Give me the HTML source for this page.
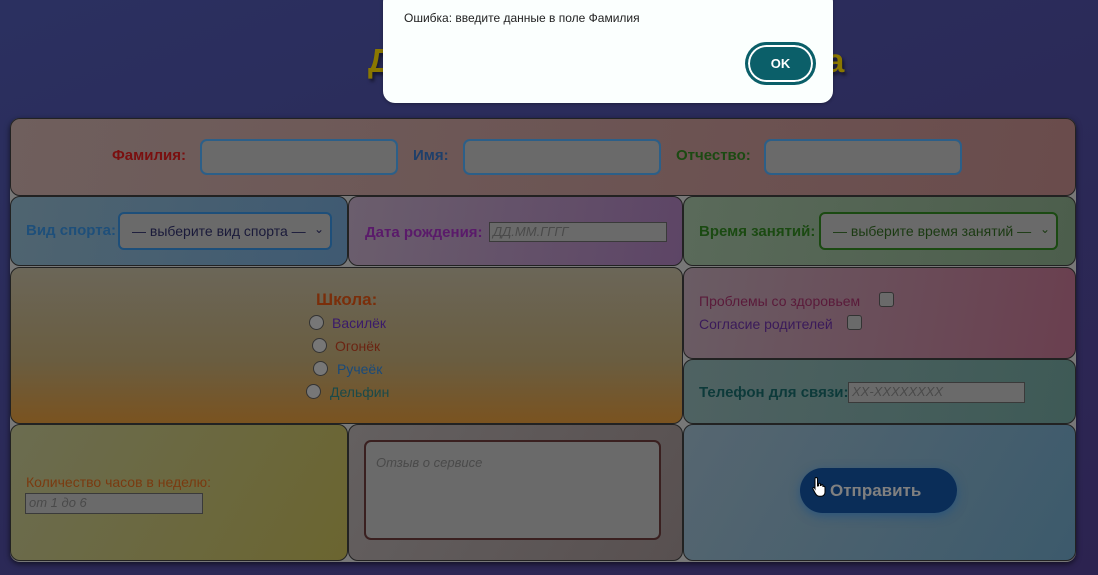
<!DOCTYPE html>
<html><head><meta charset="utf-8"><style>
*{box-sizing:border-box;margin:0;padding:0}
body{width:1098px;height:575px;overflow:hidden;position:relative;font-family:"Liberation Sans","DejaVu Sans",sans-serif;background:linear-gradient(160deg,#2b3060 0%,#2b2a58 50%,#2c2350 100%)}
.a{position:absolute}
.c{position:absolute;border:1.5px solid #222;border-radius:10px}
.lbl{position:absolute;font-weight:bold;font-size:15px}
.inp{position:absolute;background:#6a6a6a;border:1.5px solid #3a3a3a}
.ph{font-style:italic;color:#4a4a4a;font-size:13px;padding-left:3px;line-height:18px}
.rad{position:absolute;width:15px;height:15px;border-radius:50%;background:#777;border:1.5px solid #333}
.chk{position:absolute;width:15px;height:15px;border-radius:3px;background:#6a6a6a;border:1.5px solid #333}
</style></head><body>
<div class="a" style="left:368px;top:42px;font-size:33px;font-weight:bold;color:#8a7700;text-shadow:2px 3px 3px rgba(0,0,0,.5)">Д</div>
<div class="a" style="left:826px;top:42px;font-size:33px;font-weight:bold;color:#8a7700;text-shadow:2px 3px 3px rgba(0,0,0,.5)">а</div>

<div class="a" style="left:10px;top:118px;width:1066px;height:444px;background:#777;border-radius:10px;box-shadow:0 2px 6px rgba(0,0,0,.6)"></div>

<div class="c" style="left:10px;top:118px;width:1066px;height:78px;background:linear-gradient(100deg,#6f5f5d,#6a4c4c)"></div>
<div class="lbl" style="left:112px;top:147px;color:#7a0f0f">Фамилия:</div>
<div class="inp" style="left:200px;top:139px;width:198px;height:36px;border:2px solid #2c5f88;border-radius:7px"></div>
<div class="lbl" style="left:413px;top:147px;color:#1e3f6a">Имя:</div>
<div class="inp" style="left:463px;top:139px;width:198px;height:36px;border:2px solid #2c5f88;border-radius:7px"></div>
<div class="lbl" style="left:676px;top:147px;color:#1b4a12">Отчество:</div>
<div class="inp" style="left:764px;top:139px;width:198px;height:36px;border:2px solid #2c5f88;border-radius:7px"></div>

<div class="c" style="left:10px;top:196px;width:338px;height:70px;background:linear-gradient(100deg,#4f6470,#3f5a72)"></div>
<div class="lbl" style="left:26px;top:222px;color:#1e4f7a">Вид спорта:</div>
<div class="inp" style="left:118px;top:212px;width:214px;height:38px;border:2px solid #1e4f7a;border-radius:6px;font-size:14px;color:#1a1a3a;padding:9px 0 0 12px">— выберите вид спорта —<span style="position:absolute;right:6px;top:8px;font-size:12px">&#8964;</span></div>

<div class="c" style="left:348px;top:196px;width:335px;height:70px;background:linear-gradient(100deg,#6b5e6d,#5d4566)"></div>
<div class="lbl" style="left:365px;top:224px;color:#5a1a6a">Дата рождения:</div>
<div class="inp ph" style="left:489px;top:222px;width:178px;height:20px">ДД.ММ.ГГГГ</div>

<div class="c" style="left:683px;top:196px;width:393px;height:70px;background:linear-gradient(100deg,#5a6a5a,#4c5e4c)"></div>
<div class="lbl" style="left:699px;top:223px;color:#1b4a12">Время занятий:</div>
<div class="inp" style="left:819px;top:212px;width:239px;height:38px;border:2px solid #1b4a12;border-radius:6px;font-size:14px;color:#1b3a12;padding:9px 0 0 12px">— выберите время занятий —<span style="position:absolute;right:6px;top:8px;font-size:12px">&#8964;</span></div>

<div class="c" style="left:10px;top:267px;width:673px;height:157px;background:linear-gradient(180deg,#6b6658,#6a5d40 60%,#7a5320)"></div>
<div class="lbl" style="left:316px;top:290px;font-size:17px;color:#7a2e0a">Школа:</div>
<div class="rad" style="left:309px;top:315px"></div><div class="a" style="left:332px;top:315px;font-size:14px;color:#3a1a6a">Василёк</div>
<div class="rad" style="left:312px;top:338px"></div><div class="a" style="left:335px;top:338px;font-size:14px;color:#6a2412">Огонёк</div>
<div class="rad" style="left:313px;top:361px"></div><div class="a" style="left:337px;top:361px;font-size:14px;color:#1a4a7a">Ручеёк</div>
<div class="rad" style="left:306px;top:384px"></div><div class="a" style="left:330px;top:384px;font-size:14px;color:#1a4a4a">Дельфин</div>

<div class="c" style="left:683px;top:267px;width:393px;height:92px;background:linear-gradient(100deg,#6a5c64,#6a3f4f)"></div>
<div class="a" style="left:699px;top:293px;font-size:14px;color:#5a1a3a">Проблемы со здоровьем</div>
<div class="chk" style="left:879px;top:292px"></div>
<div class="a" style="left:699px;top:316px;font-size:14px;color:#3a1a5a">Согласие родителей</div>
<div class="chk" style="left:847px;top:315px"></div>

<div class="c" style="left:683px;top:359px;width:393px;height:65px;background:linear-gradient(100deg,#4f6262,#3e5a56)"></div>
<div class="lbl" style="left:699px;top:384px;color:#0d3a3a">Телефон для связи:</div>
<div class="inp ph" style="left:848px;top:382px;width:177px;height:21px">XX-XXXXXXXX</div>

<div class="c" style="left:10px;top:424px;width:338px;height:137px;background:linear-gradient(120deg,#6b6c50,#6b6530)"></div>
<div class="a" style="left:26px;top:474px;font-size:14px;color:#7a3a10">Количество часов в неделю:</div>
<div class="inp ph" style="left:25px;top:493px;width:178px;height:21px">от 1 до 6</div>

<div class="c" style="left:348px;top:424px;width:335px;height:137px;background:linear-gradient(120deg,#646060,#585050)"></div>
<div class="inp" style="left:364px;top:440px;width:297px;height:100px;border:2px solid #3a2020;border-radius:7px"><div class="ph" style="padding:12px 0 0 10px">Отзыв о сервисе</div></div>

<div class="c" style="left:683px;top:424px;width:393px;height:137px;background:linear-gradient(120deg,#566670,#3c5a6c)"></div>
<div class="a" style="left:800px;top:468px;width:157px;height:45px;border-radius:23px;background:#0a2d58;box-shadow:0 3px 10px rgba(30,80,130,.7);color:#808080;font-weight:bold;font-size:17px;line-height:45px;padding-left:30px">Отправить</div>
<svg class="a" style="left:812px;top:476px" width="16" height="22" viewBox="0 0 16 22"><path d="M4 1.5c1 0 1.5.6 1.5 1.5v7l1-.2V8c0-1 1.8-1 1.8 0v1.5l.8-.1c0-1 1.8-1 1.8 0v1l.7-.1c.8 0 1.4.5 1.4 1.4v4.5c0 2-1.5 4-3.5 4H7c-1.5 0-2.5-1-3.5-2.5L1 13c-.6-.9.6-2 1.4-1.2L3 12.8V3c0-.9.4-1.5 1-1.5z" fill="#fff" stroke="#000" stroke-width="1"/></svg>

<div class="a" style="left:383px;top:-10px;width:450px;height:113px;background:#fbfffe;border-radius:12px;box-shadow:0 1px 3px rgba(0,0,0,.3)"></div>
<div class="a" style="left:404px;top:11px;font-size:12px;color:#222">Ошибка: введите данные в поле Фамилия</div>
<div class="a" style="left:746px;top:43px;width:69px;height:41px;border-radius:21px;background:#0b5f69;box-shadow:0 0 0 2px #fff inset,0 0 0 1px #0b5f69;border:2px solid #0b5f69;color:#fff;font-weight:bold;font-size:13px;text-align:center;line-height:37px">OK</div>
</body></html>
